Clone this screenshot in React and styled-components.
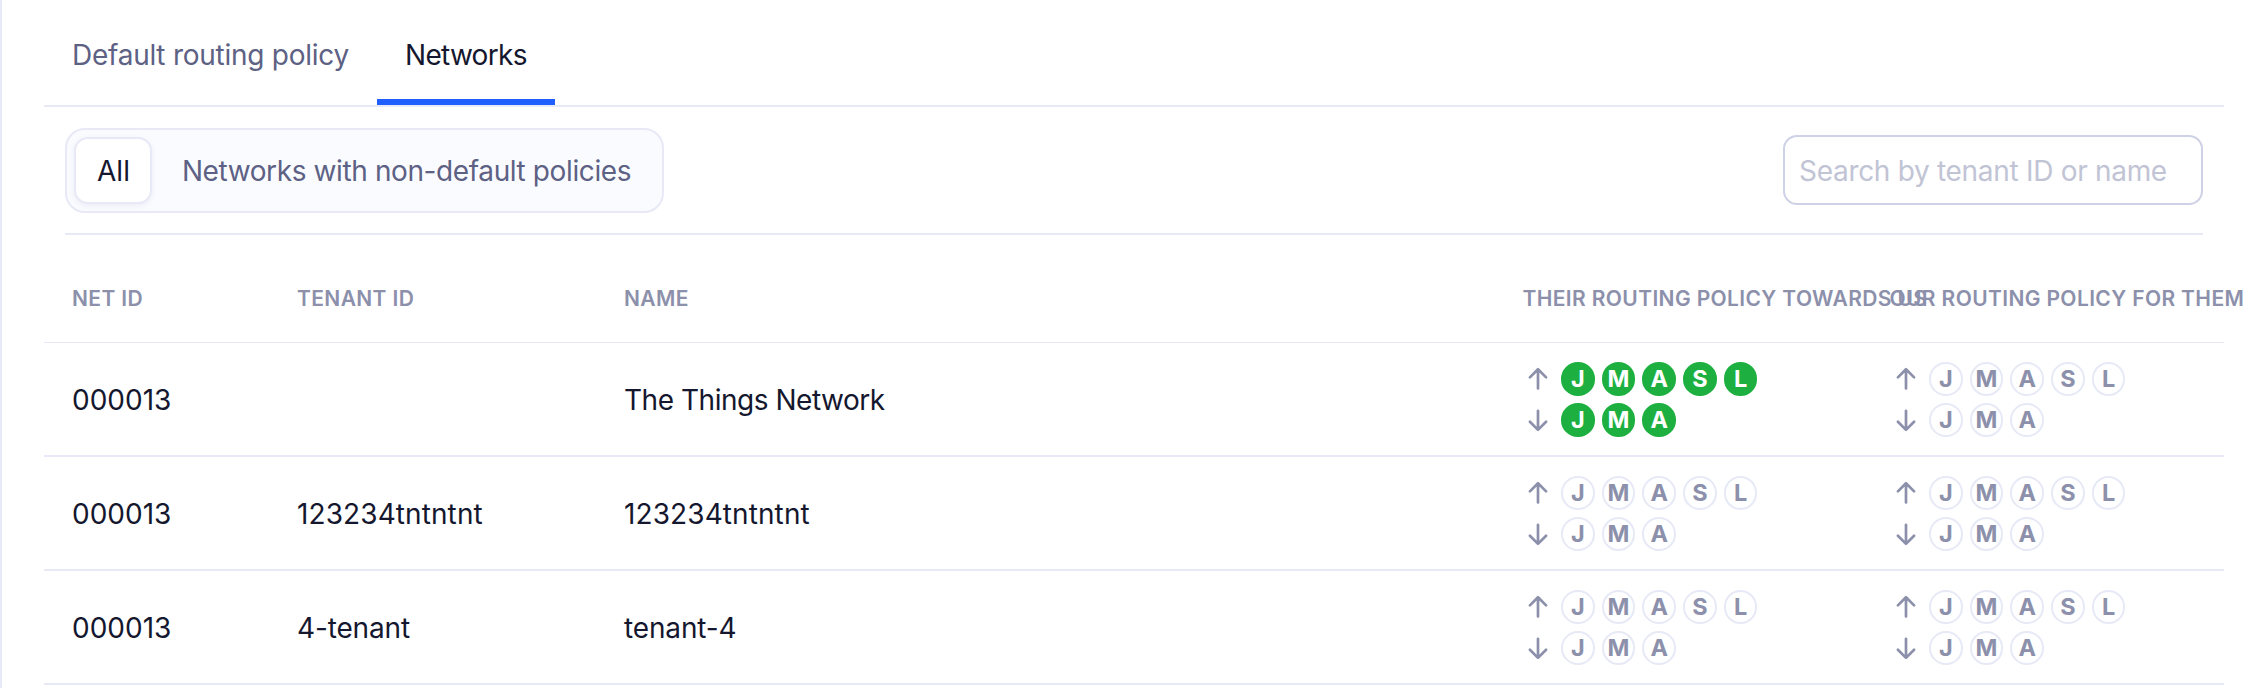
import React from 'react';
import styled, { createGlobalStyle } from 'styled-components';

const line = '#e7e9f6';
const muted = '#8c90ab';
const medium = '#5d6184';
const ink = '#14172e';

const GlobalStyle = createGlobalStyle`
  *, *::before, *::after { box-sizing: border-box; }
  html, body { margin: 0; background: #fff; overflow: hidden; }
  body {
    font-family: Inter, "Liberation Sans", sans-serif;
    font-size: 28px;
    line-height: 36px;
    color: ${ink};
  }
  button, input { font: inherit; }
`;

const Page = styled.main`
  height: 688px;
  overflow: hidden;
  padding: 0 42px;
  border-left: 2px solid ${line};
  background: #fff;
`;

const Tabs = styled.nav`
  display: flex;
  height: 107px;
  border-bottom: 2px solid ${line};
`;

const Tab = styled.button`
  padding: 11px 0 0 28px;
  width: ${(p) => p.$width}px;
  white-space: nowrap;
  background: none;
  border: 0;
  border-bottom: 6px solid ${(p) => (p.$active ? '#1f5eff' : 'transparent')};
  color: ${(p) => (p.$active ? ink : medium)};
  text-align: left;
  letter-spacing: ${(p) => (p.$active ? '-0.7px' : '-0.26px')};
`;

const Toolbar = styled.section`
  display: flex;
  align-items: center;
  justify-content: space-between;
  height: 128px;
  margin: 0 21px;
  border-bottom: 2px solid ${line};
`;

const Toggle = styled.div`
  display: flex;
  gap: 5px;
  width: 599px;
  height: 85px;
  margin-top: 1px;
  padding: 7px;
  border: 2px solid ${line};
  border-radius: 20px;
  background: #fafbff;
`;

const ToggleOption = styled.button`
  height: 67px;
  padding: 1px 0 0 1px;
  width: ${(p) => p.$width}px;
  white-space: nowrap;
  border: 2px solid ${(p) => (p.$active ? line : 'transparent')};
  border-radius: 14px;
  background: ${(p) => (p.$active ? '#fff' : 'transparent')};
  box-shadow: ${(p) => (p.$active ? '0 2px 6px rgba(20, 23, 80, 0.06)' : 'none')};
  color: ${(p) => (p.$active ? ink : medium)};
  letter-spacing: ${(p) => (p.$active ? '0' : '-0.39px')};
`;

const Search = styled.input`
  width: 420px;
  height: 70px;
  padding: 2px 14px 0;
  border: 2px solid #cfd2e6;
  border-radius: 14px;
  background: #fff;
  outline: none;
  letter-spacing: -0.3px;
  &::placeholder { color: #c1c4d5; opacity: 1; }
`;

const Row = styled.div`
  display: grid;
  grid-template-columns: 225px 327px 899px 368px 1fr;
  align-items: center;
  height: 114px;
  padding-left: 28px;
  border-bottom: 2px solid ${line};
`;

const HeaderRow = styled(Row)`
  grid-template-columns: 225px 327px 898.5px 367px 1fr;
  height: 108px;
  padding-top: 46px;
  align-items: start;
  border-bottom: 1px solid ${line};
  font-size: 21px;
  font-weight: 600;
  letter-spacing: 0.37px;
  color: ${muted};
  white-space: nowrap;
`;

const HeaderCell = styled.span`
  min-width: 0;
`;

const Cell = styled.span`
  padding-top: 2px;
  letter-spacing: ${(p) => p.$tracking || 0}px;
`;

const Policy = styled.div`
  display: grid;
  gap: 7px;
  padding-top: 1px;
`;

const Direction = styled.div`
  display: flex;
  align-items: center;
  gap: 7px;
  height: 33.7px;
`;

const Arrow = styled.svg`
  width: 28px;
  height: 28px;
  margin-right: 3px;
  fill: none;
  stroke: ${muted};
  stroke-width: 2.7;
  stroke-linecap: round;
  stroke-linejoin: round;
`;

const Badge = styled.span`
  display: flex;
  align-items: center;
  justify-content: center;
  width: 33.7px;
  height: 33.7px;
  border-radius: 50%;
  border: 2px solid ${(p) => (p.$on ? '#1db040' : line)};
  background: ${(p) => (p.$on ? '#1db040' : '#fff')};
  color: ${(p) => (p.$on ? '#fff' : muted)};
  font-size: 23.5px;
  line-height: 30px;
  font-weight: 700;
`;

function RoutingPolicy({ on }) {
  return (
    <Policy>
      <Direction>
        <Arrow viewBox="0 0 28 28"><path d="M15 23.5V4.5M6.9 12.4L15 4.3L23.1 12.4" /></Arrow>
        {['J', 'M', 'A', 'S', 'L'].map((c) => <Badge key={c} $on={on}>{c}</Badge>)}
      </Direction>
      <Direction>
        <Arrow viewBox="0 0 28 28"><path d="M15 4.8V23.7M6.9 15.8L15 23.9L23.1 15.8" /></Arrow>
        {['J', 'M', 'A'].map((c) => <Badge key={c} $on={on}>{c}</Badge>)}
      </Direction>
    </Policy>
  );
}

const columns = ['NET ID', 'TENANT ID', 'NAME', 'THEIR ROUTING POLICY TOWARDS US', 'OUR ROUTING POLICY FOR THEM'];

const networks = [
  { netId: '000013', tenantId: '', name: 'The Things Network', tracking: -0.47, theirs: true },
  { netId: '000013', tenantId: '123234tntntnt', name: '123234tntntnt', tracking: 0.1, theirs: false },
  { netId: '000013', tenantId: '4-tenant', name: 'tenant-4', tracking: -0.14, theirs: false },
];

export default function App() {
  return (
    <>
      <GlobalStyle />
      <Page>
        <Tabs>
          <Tab $width={333}>Default routing policy</Tab>
          <Tab $width={178} $active>Networks</Tab>
        </Tabs>
        <Toolbar>
          <Toggle>
            <ToggleOption $width={78} $active>All</ToggleOption>
            <ToggleOption $width={498}>Networks with non-default policies</ToggleOption>
          </Toggle>
          <Search placeholder="Search by tenant ID or name" />
        </Toolbar>
        <HeaderRow>
          {columns.map((c) => <HeaderCell key={c}>{c}</HeaderCell>)}
        </HeaderRow>
        {networks.map((n) => (
          <Row key={n.name}>
            <Cell>{n.netId}</Cell>
            <Cell $tracking={n.tracking}>{n.tenantId}</Cell>
            <Cell $tracking={n.tracking}>{n.name}</Cell>
            <RoutingPolicy on={n.theirs} />
            <RoutingPolicy on={false} />
          </Row>
        ))}
      </Page>
    </>
  );
}
